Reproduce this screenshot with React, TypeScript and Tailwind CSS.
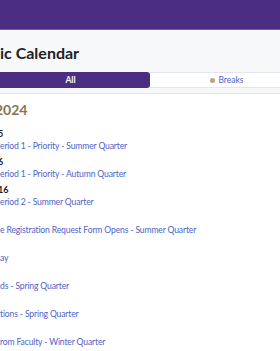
import React from 'react';

const font = { fontFamily: 'Lato, "Open Sans", sans-serif' };

type Entry = { date: string; title: string };

const entries: Entry[] = [
    { date: '5', title: 'eriod 1 - Priority - Summer Quarter' },
    { date: '6', title: 'eriod 1 - Priority - Autumn Quarter' },
    { date: '16', title: 'eriod 2 - Summer Quarter' },
    { date: '', title: 'e Registration Request Form Opens - Summer Quarter' },
    { date: '', title: 'ay' },
    { date: '', title: 'ds - Spring Quarter' },
    { date: '', title: 'tions - Spring Quarter' },
    { date: '', title: 'rom Faculty - Winter Quarter' },
];

function EventRow({ entry }: { entry: Entry }) {
    return (
        <div className="flex flex-col h-[28px]">
            <div className="h-[12px] leading-[14px] -ml-[2px] text-[9px] font-bold text-[#222]">
                {entry.date}
            </div>
            <a className="h-[14px] leading-[14px] text-[8.6px] tracking-[-0.15px] text-[#4c63c4] whitespace-nowrap">
                {entry.title}
            </a>
        </div>
    );
}

export default function App() {
    return (
        <div className="w-[280px] h-[351px] overflow-hidden bg-white" style={font}>
            {/* top bar */}
            <div className="h-[30px] bg-[#4b2e83] border-b border-[#6f5a9c]" />

            {/* page heading + filter tabs */}
            <div className="bg-[#f7f8fa] border-b border-[#e4e6eb] pt-[11px] pb-[5px]">
                <h1 className="text-[16px] leading-[24px] font-bold text-[#222] whitespace-nowrap">ic Calendar</h1>
                <div className="mt-[7px] -ml-[9px] flex flex-row h-[16px]">
                    <div className="w-[159px] shrink-0 bg-[#4b2e83] rounded-r-[3px] flex items-center justify-center text-[8.5px] font-bold text-white">
                        All
                    </div>
                    <div className="w-[154px] shrink-0 bg-white border-y border-[#e4e6eb] flex items-center justify-center gap-[3px] text-[8.5px] text-[#4c63c4]">
                        <span className="w-[5px] h-[5px] rounded-full bg-[#b7a57a]" />
                        Breaks
                    </div>
                </div>
            </div>

            {/* events */}
            <div className="pt-[6px]">
                <h2 className="-ml-[5px] text-[14px] leading-[20px] font-bold text-[#85754d]">2024</h2>
                <div className="mt-[7px] flex flex-col">
                    {entries.map((e, i) => (
                        <EventRow key={i} entry={e} />
                    ))}
                </div>
            </div>
        </div>
    );
}
